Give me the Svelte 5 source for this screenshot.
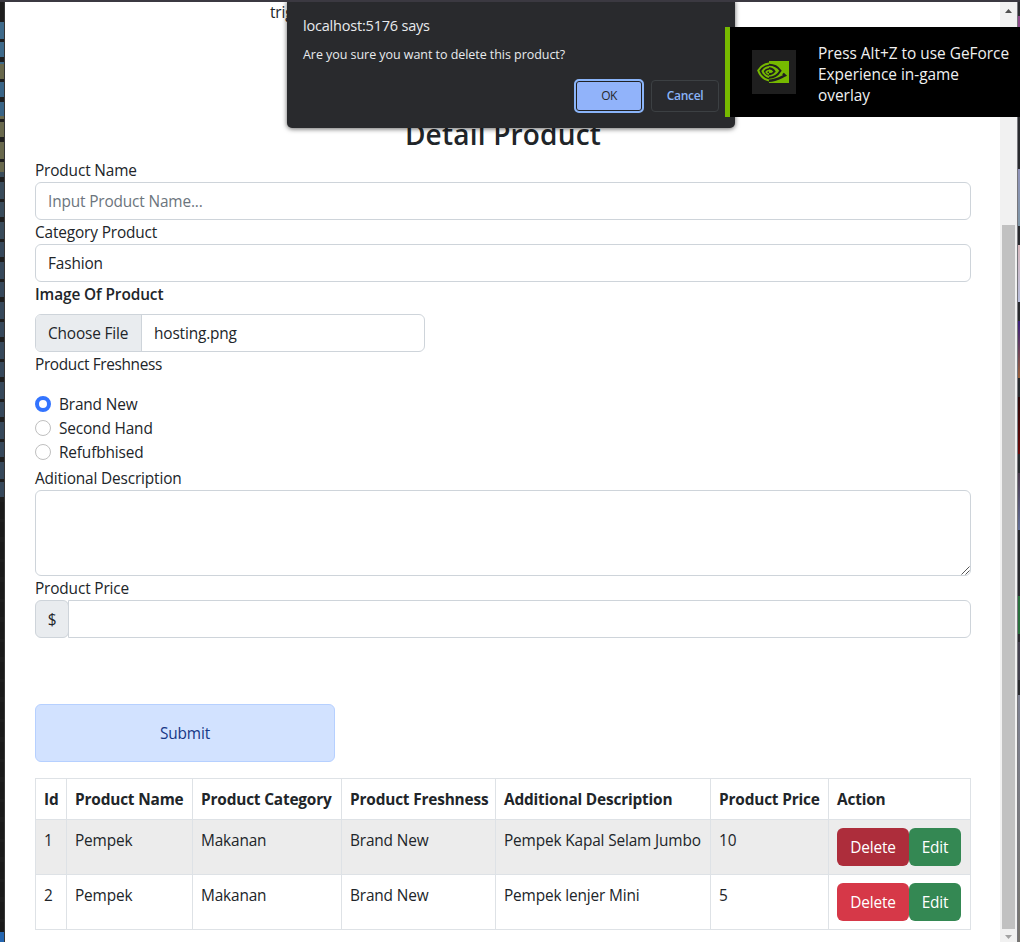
<script>
  const labels = ['Id', 'Product Name', 'Product Category', 'Product Freshness', 'Additional Description', 'Product Price', 'Action'];
  const widths = [31, 126, 149, 154, 215, 118, 142];
  const rows = [
    ['1', 'Pempek', 'Makanan', 'Brand New', 'Pempek Kapal Selam Jumbo', '10'],
    ['2', 'Pempek', 'Makanan', 'Brand New', 'Pempek lenjer Mini', '5']
  ];
  const freshness = ['Brand New', 'Second Hand', 'Refufbhised'];
</script>

<div class="screen">
  <div class="edge-left"></div>
  <main>
    <p class="intro">trig</p>
    <h3>Detail Product</h3>
    <div class="label">Product Name</div>
    <div class="control muted">Input Product Name...</div>
    <div class="label">Category Product</div>
    <div class="control">Fashion</div>
    <div class="label strong">Image Of Product</div>
    <div class="file"><span class="choose">Choose File</span><span class="name">hosting.png</span></div>
    <div class="label tight">Product Freshness</div>
    <div class="radios">
      {#each freshness as f, i}
        <div class="radio"><span class="dot" class:on={i === 0}></span><span>{f}</span></div>
      {/each}
    </div>
    <div class="label">Aditional Description</div>
    <div class="area">
      <svg width="9" height="9" viewBox="0 0 9 9" stroke="#555" stroke-width="1" fill="none"><path d="M.5 8.500l8-8M4.500 8.500l4-4" /></svg>
    </div>
    <div class="label">Product Price</div>
    <div class="group"><span class="addon">$</span><span class="price"></span></div>
    <div class="submit">Submit</div>
    <table>
      <colgroup>{#each widths as w}<col style="width:{w}px" />{/each}</colgroup>
      <thead><tr>{#each labels as l}<th>{l}</th>{/each}</tr></thead>
      <tbody>
        {#each rows as row, r}
          <tr class:hover={r === 0}>
            {#each row as cell}<td>{cell}</td>{/each}
            <td><div class="actions"><span class="btn del">Delete</span><span class="btn edit">Edit</span></div></td>
          </tr>
        {/each}
      </tbody>
    </table>
  </main>
  <div class="scrollbar">
    <svg width="17" height="17" viewBox="0 0 17 17"><path d="M5 11h7L8.500 7z" fill="#505050" /></svg>
    <div class="thumb"></div>
    <svg width="17" height="13" viewBox="0 0 17 13"><path d="M5 6h7L8.500 10z" fill="#a3a3a3" /></svg>
  </div>
  <div class="edge-right"></div>

  <div class="dialog">
    <div class="title">localhost:5176 says</div>
    <div class="msg">Are you sure you want to delete this product?</div>
    <div class="buttons"><span class="ok">OK</span><span class="cancel">Cancel</span></div>
  </div>

  <div class="toast">
    <div class="logo">
      <svg width="32" height="22" viewBox="0 0 32 22">
        <path d="M12 0h20v22H12z" fill="#76b900" />
        <g fill="none" stroke-width="2">
          <path d="M12 2.500C7 3 3 6.500 1.200 9.500 3 14.500 7 18.500 12 19.500" stroke="#76b900" />
          <path d="M12 6C9 6.300 6.500 8.500 5.500 10c1.300 3.200 3.500 5.500 6.500 6" stroke="#76b900" />
          <path d="M12 9.500c-1.500.2-2.300.8-2.800 1.500.7 1.200 1.600 1.900 2.800 2.100" stroke="#76b900" stroke-width="1.600" />
          <path d="M12 3.700c6 0 9.500 3 11.500 6-2.500 4-6.500 7-11.500 7" stroke="#1f1f1f" />
          <path d="M12 7.300c3 0 4.500 1.500 5.500 3.200-1.500 2-3.300 3-5.500 2.500" stroke="#1f1f1f" />
          <path d="M12 19.800c6.500 0 11-3 16-5.300l-2-2" stroke="#1f1f1f" stroke-width="2.400" />
        </g>
      </svg>
    </div>
    <div class="lines"><span>Press Alt+Z to use GeForce</span><span>Experience in-game</span><span>overlay</span></div>
  </div>
</div>

<style>
  :global(body) { margin: 0; background: #fff; }
  .screen { position: relative; display: flex; width: 1020px; height: 942px; box-sizing: border-box; overflow: hidden; font: 400 15.400px/26px "Open Sans", "Noto Sans", sans-serif; letter-spacing: -0.150px; color: #212529; border-top: 2px solid #3b3941; }
  .screen * { box-sizing: border-box; }
  span { white-space: nowrap; }
  .edge-left { width: 5px; flex: none; border-right: 1px solid #353535; background:
    linear-gradient(to bottom, transparent 930px, #2566b0 930px),
    repeating-linear-gradient(to bottom, transparent 0 15px, #1e1e1e 15px 20px, transparent 20px 37px, #1e1e1e 37px 40px),
    linear-gradient(to bottom, #1e1e1e 20px, #3e6a8a 20px 62px, #68684c 62px 80px, #396486 80px 114px, #68684c 114px 170px, #394b5a 170px 240px, #36485a 240px 498px, transparent 498px), #1a1a1a; }
  main { flex: none; width: 995px; padding: 0 29px 0 30px; height: 940px; }
  .intro { height: 24px; margin: -2px 0 92.400px 235px; }
  h3 { height: 33.600px; margin: 0 0 8px; text-align: center; font-size: 28px; font-weight: 600; line-height: 36px; letter-spacing: 0.200px; }
  .label { height: 24px; }
  .tight { letter-spacing: -0.350px; }
  .strong { font-weight: 600; letter-spacing: -0.100px; margin-bottom: 8px; }
  .control, .file, .area { border: 1px solid #ced4da; border-radius: 6px; height: 38px; }
  .control { padding: 6px 12px; }
  .muted { color: #6c757d; }
  .file { display: flex; width: 390px; line-height: 38px; overflow: hidden; }
  .choose { width: 106px; padding-left: 12px; background: #e9ecef; border-right: 1px solid #ced4da; }
  .name { padding-left: 12px; }
  .radios { margin: 16px 0 2px; }
  .radio { display: flex; height: 24px; gap: 8px; }
  .dot { width: 16px; height: 16px; margin-top: 4px; border: 1px solid #bfbfbf; border-radius: 50%; }
  .dot.on { border: 4.500px solid #3374ff; }
  .area { height: 86px; display: flex; align-items: flex-end; justify-content: flex-end; }
  .group { display: flex; height: 38px; margin-bottom: 66px; }
  .addon { width: 34px; border: 1px solid #ced4da; border-radius: 6px; background: #e9ecef; text-align: center; line-height: 38px; }
  .price { flex: 1; margin-left: -1px; border: 1px solid #ced4da; border-radius: 0 6px 6px 0; background: #fff; }
  .submit { width: 300px; height: 58px; margin-bottom: 16px; border: 1px solid #b6d0ff; border-radius: 6px; background: #d2e2ff; color: #173786; text-align: center; line-height: 57px; }
  table { width: 936px; table-layout: fixed; border-collapse: collapse; }
  th, td { padding: 8px 8px 6px; border: 1px solid #dee2e6; text-align: left; vertical-align: top; height: 41px; white-space: nowrap; }
  th { font-weight: 700; letter-spacing: -0.180px; }
  td { height: 55px; }
  .hover { background: #ececec; }
  .actions { display: flex; }
  .btn { height: 38px; border-radius: 6px; color: #fff; line-height: 39px; text-align: center; }
  .del { width: 72px; background: #d63848; }
  .hover .del { background: #ad2d3b; }
  .edit { width: 52px; background: #348853; }
  .scrollbar { display: flex; flex-direction: column; width: 17px; flex: none; background: #f1f1f1; }
  .thumb { width: 13px; height: 704px; margin: 206px 0 0 2px; background: #c1c1c1; }
  .edge-right { width: 3px; flex: none; border-left: 1px solid #77777c; background: linear-gradient(to bottom, #2b2b30 14px, #8e4a8a 14px 100px, #292a2e 100px 167px, #9295bb 167px, #7f96a5 224px, #292a2e 224px 243px, #d8b8bd 243px, #b6bdda 300px, #292a2e 300px 319px, #3b207c 319px, #9c633b 376px, #292a2e 376px 395px, #2b0708 395px, #6b0707 452px, #292a2e 452px 471px, #4a394b 471px, #64719a 528px, #292a2e 528px 594px, #2a713d 594px 632px, #292a2e 632px 640px, #44424f 640px 678px, #292a2e 678px 693px, #7f8292 693px, #77756f 940px); }
  .dialog { position: absolute; left: 287px; top: -2px; width: 448px; height: 128px; padding: 14px 16px; border-radius: 0 0 5px 5px; background: #292a2d; color: #e8eaed; box-shadow: 0 1px 5px #0009; }
  .title { font-size: 14.500px; height: 24px; line-height: 24px; letter-spacing: -0.200px; }
  .msg { font-size: 12.500px; height: 40px; line-height: 34px; letter-spacing: -0.050px; }
  .buttons { display: flex; justify-content: flex-end; gap: 7px; height: 34px; margin-top: 1px; font-size: 12px; text-align: center; }
  .ok { width: 70px; height: 34px; border: 2px solid #8ab4f8; border-radius: 5px; background: #91b3fa; color: #292a2d; box-shadow: inset 0 0 0 1px #202124; line-height: 30px; letter-spacing: -0.500px; }
  .cancel { width: 68px; height: 32px; margin-top: 1px; border: 1px solid #3c4043; border-radius: 4px; color: #8ab4f8; font-weight: 600; line-height: 30px; letter-spacing: -0.300px; }
  .toast { position: absolute; left: 725px; top: 25px; width: 295px; height: 90px; display: flex; border-left: 5px solid #76b900; background: #000; color: #f0f0f0; font-size: 15.400px; letter-spacing: 0; line-height: 21px; }
  .logo { width: 44px; height: 44px; margin: 23px 22px 0; padding: 11px 5px; background: #1f1f1f; }
  .logo svg { display: block; }
  .lines { display: flex; flex-direction: column; padding-top: 16px; }
</style>
